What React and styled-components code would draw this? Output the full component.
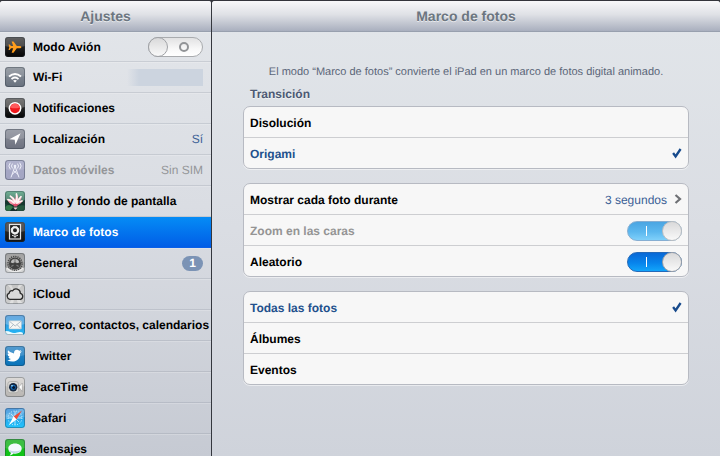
import { useState } from "react"
import styled, { createGlobalStyle } from "styled-components"

const cells = [
    { id: "wifi", label: "Wi-Fi", icon: WifiIcon, hidden: true },
    { id: "notificaciones", label: "Notificaciones", icon: NotificationsIcon },
    { id: "localizacion", label: "Localización", icon: LocationIcon, value: "Sí" },
    { id: "datos", label: "Datos móviles", icon: CellularIcon, value: "Sin SIM", disabled: true },
    { id: "brillo", label: "Brillo y fondo de pantalla", icon: WallpaperIcon },
    { id: "marco", label: "Marco de fotos", icon: FrameIcon },
    { id: "general", label: "General", icon: GeneralIcon, badge: 1 },
    { id: "icloud", label: "iCloud", icon: CloudIcon },
    { id: "correo", label: "Correo, contactos, calendarios", icon: MailIcon },
    { id: "twitter", label: "Twitter", icon: TwitterIcon },
    { id: "facetime", label: "FaceTime", icon: FaceTimeIcon },
    { id: "safari", label: "Safari", icon: SafariIcon },
    { id: "mensajes", label: "Mensajes", icon: MessagesIcon },
]

export default function App(){
    const [selected, setSelected] = useState("marco")
    const [airplane, setAirplane] = useState(false)
    const [shuffle, setShuffle] = useState(true)
    const [transition, setTransition] = useState("Origami")
    const [album, setAlbum] = useState("Todas las fotos")

    return (
        <>
            <GlobalStyle />
            <Shell>
                <Sidebar>
                    <TopBar><h1>Ajustes</h1></TopBar>
                    <nav>
                        <MenuSwitchRow>
                            <AirplaneIcon />
                            <span className="label">Modo Avión</span>
                            <Switch checked={airplane} onChange={e => setAirplane(e.target.checked)} />
                        </MenuSwitchRow>
                        {cells.map(({ id, label, icon: Icon, value, badge, hidden, disabled }) => (
                            <MenuRow
                                key={id}
                                href={`#${id}`}
                                $active={selected === id}
                                $disabled={disabled}
                                aria-disabled={disabled}
                                onClick={() => !disabled && setSelected(id)}
                            >
                                <Icon />
                                <span className="label">{label}</span>
                                {value && <span className="value">{value}</span>}
                                {badge && <Badge>{badge}</Badge>}
                                {hidden && <HiddenName />}
                            </MenuRow>
                        ))}
                    </nav>
                </Sidebar>
                <Pane>
                    <TopBar><h2>Marco de fotos</h2></TopBar>
                    <Content>
                        <Hint>El modo “Marco de fotos” convierte el iPad en un marco de fotos digital animado.</Hint>
                        <GroupTitle id="transition">Transición</GroupTitle>
                        <Group role="radiogroup" aria-labelledby="transition">
                            {["Disolución", "Origami"].map(name => (
                                <Option key={name} group="transition" name={name} value={transition} onPick={setTransition} />
                            ))}
                        </Group>
                        <Group>
                            <DurationRow type="button">
                                <span>Mostrar cada foto durante</span>
                                <span className="value">3 segundos</span>
                                <Chevron />
                            </DurationRow>
                            <Row $disabled>
                                <span>Zoom en las caras</span>
                                <Switch defaultChecked disabled />
                            </Row>
                            <Row>
                                <span>Aleatorio</span>
                                <Switch checked={shuffle} onChange={e => setShuffle(e.target.checked)} />
                            </Row>
                        </Group>
                        <Group role="radiogroup" aria-label="Fotos">
                            {["Todas las fotos", "Álbumes", "Eventos"].map(name => (
                                <Option key={name} group="album" name={name} value={album} onPick={setAlbum} />
                            ))}
                        </Group>
                    </Content>
                </Pane>
            </Shell>
        </>
    )
}

function Option({ group, name, value, onPick }){
    const checked = value === name
    return (
        <Row $checked={checked}>
            <Radio name={group} checked={checked} onChange={() => onPick(name)} />
            <span>{name}</span>
            {checked && <Check />}
        </Row>
    )
}

function Check(){
    return (
        <svg width="10" height="12" viewBox="0 0 10 12" aria-hidden="true">
            <path d="M1.100 5 3.600 8.400 8.600 1" fill="none" stroke="#174a8c" strokeWidth="2.300" />
        </svg>
    )
}

function Chevron(){
    return (
        <svg width="8" height="12" viewBox="0 0 8 12" aria-hidden="true">
            <path d="M1.500 1 6 5 1.500 9" fill="none" stroke="#6f7175" strokeWidth="2.200" />
        </svg>
    )
}

/* rounded app tile with a light upper half, shared by every menu icon */
function Tile({ id, from, to, gloss = 0.3, children }){
    return (
        <IconSvg viewBox="0 0 20 20" aria-hidden="true">
            <defs>
                <linearGradient id={id} x1="0" y1="0" x2="0" y2="1">
                    <stop offset="0" stopColor={from} />
                    <stop offset="1" stopColor={to} />
                </linearGradient>
                <clipPath id={`${id}-clip`}><rect width="20" height="20" rx="3" /></clipPath>
            </defs>
            <g clipPath={`url(#${id}-clip)`}>
                <rect width="20" height="20" fill={`url(#${id})`} />
                <path d="M0 0h20v9q-10 3-20 0z" fill="#fff" opacity={gloss} />
                {children}
            </g>
            <rect x=".5" y=".5" width="19" height="19" rx="2.6" fill="none" stroke="#26303c" strokeOpacity=".35" />
        </IconSvg>
    )
}

function AirplaneIcon(){
    return (
        <Tile id="airplane" from="#3a3a3a" to="#050505" gloss={0.2}>
            <path d="M16.3 10.2c0-.6-.8-1.100-1.700-1.100h-2.800L8.500 4.600H6.600l1.600 4.500H6L4.700 7.400H3.500l.8 2.800-.8 2.800h1.200L6 11.300h2.200l-1.600 4.500h1.900l3.300-4.500h2.800c.9 0 1.700-.5 1.700-1.100z" fill="#ff9d1c" />
        </Tile>
    )
}

function WifiIcon(){
    return (
        <Tile id="wifi-tile" from="#8b929b" to="#68717e" gloss={0.12}>
            <g fill="none" stroke="#fff" strokeWidth="1.9">
                <path d="M4 9.4q6-5 12 0" />
                <path d="M6.5 12.1q3.5-3 7 0" />
            </g>
            <path d="M8.1 13.6q1.9-1.3 3.8 0L10 15.8z" fill="#fff" />
        </Tile>
    )
}

function NotificationsIcon(){
    return (
        <Tile id="notifications" from="#444" to="#050505" gloss={0.28}>
            <circle cx="10" cy="10.3" r="6.4" fill="#fff" />
            <circle cx="10" cy="10.3" r="4.9" fill="#ee171c" />
            <path d="M5.4 9.4a4.7 4.7 0 0 1 9.2 0q-4.6 1.8-9.2 0z" fill="#ff5a5c" />
        </Tile>
    )
}

function LocationIcon(){
    return (
        <Tile id="location" from="#8c909b" to="#6d717f" gloss={0.15}>
            <path d="M15.6 4.2 4.4 10.2l5.3.5.7 5z" fill="#fff" />
        </Tile>
    )
}

function CellularIcon(){
    return (
        <Tile id="cellular" from="#a6a8c6" to="#a3a5c2" gloss={0.12}>
            <g fill="none" stroke="#eceef8" strokeWidth="1">
                <path d="M10 6.2 6 17.4M10 6.2l4 11.2M8.5 10.500l4.500 4M11.500 10.500l-4.500 4" />
                <path d="M7.5 3.6a3.6 3.6 0 0 0 0 4.8M12.5 3.6a3.6 3.6 0 0 1 0 4.8M5.3 2.7a5 5 0 0 0 0 6.6M14.7 2.7a5 5 0 0 1 0 6.600" />
            </g>
            <circle cx="10" cy="6" r="1.3" fill="#eceef8" />
        </Tile>
    )
}

function WallpaperIcon(){
    return (
        <Tile id="wallpaper" from="#4f9f7c" to="#092621" gloss={0.2}>
            <path d="M0 10q5-3 9 1t11-2v5q-9 3-20-1z" fill="#16372d" />
            <path d="M0 16q4-4 8 0l-3 4H0z" fill="#367b4c" />
            <path d="M12 16q4-3 8-1v5h-8z" fill="#26583e" />
            <path d="M2 8q3.500-.5 5.500 1.500L5 4.500q3.500 1 5 4l1.500-6q2.500 3 1.300 6.300L16.500 5q.3 3-1.700 5l3.200-.7q-1.500 4-7.200 5.200Q3.500 13.500 2 8z" fill="#f596a8" />
            <path d="M5.400 5.200q3.300 1.800 4.400 5.300M11.400 3q1.400 4-.6 8M16 5.700q-2.300 2-3.600 5.600M3 8.700q4 .8 6 3.300M17 10q-3 .5-5 2.500" fill="none" stroke="#fff4f4" strokeWidth="1.700" strokeLinecap="round" />
            <path d="M7.500 12.500q3 1 6 0l-1.500 3H9z" fill="#e2506e" />
            <path d="M8.500 16.500h4l-1.500 2h-1z" fill="#f2d0d4" />
        </Tile>
    )
}

function FrameIcon(){
    return (
        <Tile id="frame" from="#343434" to="#111" gloss={0.2}>
            <rect x="4.500" y="2.500" width="11" height="14.500" fill="#202020" stroke="#e4e4e4" strokeWidth="1.200" />
            <circle cx="10" cy="8.200" r="3" fill="none" stroke="#eee" strokeWidth="2" />
            <circle cx="10" cy="8.200" r="3.800" fill="none" stroke="#eee" strokeWidth="1" strokeDasharray="2 1" />
            <path d="M10 12v3.400M7 13.300q2 0 3 2 1-2 3-2" fill="none" stroke="#ddd" strokeWidth="1" />
        </Tile>
    )
}

function GeneralIcon(){
    return (
        <Tile id="general-tile" from="#8a8a8a" to="#a9a9a9" gloss={0.2}>
            <path d="M0 20v-6q3 3 10 3t10-3v6z" fill="#d6d6d6" />
            <circle cx="10" cy="10.500" r="7" fill="none" stroke="#4a4a4a" strokeWidth="1.600" strokeDasharray="1.300 .9" />
            <circle cx="10" cy="10.500" r="6" fill="#3f3f3f" />
            <path d="M5.700 9.500a4.400 4.400 0 0 1 8.600 0l-2.500.8a2 2 0 0 0-3.600 0z" fill="#b9b9b9" />
            <path d="M10 9V5.500M6.300 13.600 8.500 12M13.700 13.600 11.500 12" stroke="#777" strokeWidth="1.200" />
            <path d="M2 14.800q3 3.700 8 3.700t8-3.700" fill="none" stroke="#ececec" strokeWidth="1.200" />
        </Tile>
    )
}

function CloudIcon(){
    return (
        <Tile id="cloud" from="#b4b4b4" to="#cfcfcf" gloss={0.2}>
            <path d="M10 10 2 0h4zM10 10 14 0h4zM10 10 4 20h4zM10 10l8 10h-5z" fill="#fff" opacity=".4" />
            <path d="M4.800 15.300a3.200 3.200 0 0 1-.6-6.100 2.500 2.500 0 0 1 3.300-2.400 4.300 4.300 0 0 1 7.800 2.500 3.100 3.100 0 0 1 .2 6z" fill="#dadada" stroke="#2c2c2c" strokeWidth="1.300" />
        </Tile>
    )
}

function MailIcon(){
    return (
        <Tile id="mail" from="#3688d2" to="#22b8f7" gloss={0.25}>
            <path d="M0 16q4 0 6 1.300t6 .2 6 .5v2H0z" fill="#e8faff" />
            <rect x="4" y="5.800" width="12.400" height="8.200" rx=".6" fill="#f7f7f5" stroke="#b0c2cc" strokeWidth=".6" />
            <path d="m4.500 6.300 5.700 4.700 5.700-4.700M4.500 13.600l3.900-4M15.900 13.600l-3.900-4" fill="none" stroke="#9fb0bc" strokeWidth=".8" />
        </Tile>
    )
}

function TwitterIcon(){
    return (
        <Tile id="twitter-tile" from="#358ac9" to="#0873b9" gloss={0.15}>
            <path d="M2.300 14.200q2.200.1 3.700-1.100-2-.3-2.600-2.100h1.300Q2.500 10 2.600 7.800l1.200.3Q1.900 6.300 3 4.300q2.500 2.900 6 3.100Q8.900 4 12 3.800q1.300 0 2.200.9l2-.7-1.200 1.700 1.900-.4-1.700 1.900q.1 5.200-4.100 7.500-4.400 2-8.800-.5z" fill="#fff" />
        </Tile>
    )
}

function FaceTimeIcon(){
    return (
        <Tile id="facetime-tile" from="#d0cdca" to="#b9b6b3" gloss={0.25}>
            <rect x="2.800" y="4.500" width="10.700" height="11.300" rx="2.500" fill="#d8d7d5" stroke="#a5a3a1" strokeWidth=".7" />
            <path d="m13.700 10 3.600-4v8.500z" fill="#fff" stroke="#999" strokeWidth=".6" />
            <circle cx="8.200" cy="10.200" r="4.200" fill="#172840" />
            <circle cx="8.200" cy="10.200" r="2.500" fill="#126bbb" />
            <circle cx="8.600" cy="10.600" r="1.500" fill="#06162d" />
            <circle cx="7" cy="8.700" r=".8" fill="#bcecff" />
        </Tile>
    )
}

function SafariIcon(){
    return (
        <Tile id="safari-tile" from="#2d83d4" to="#22c6ff" gloss={0.2}>
            <path d="M0 7 5 4l4 2 5-5h6v3l-8 6-7-1-5 3z" fill="#8ac8ee" opacity=".5" />
            <circle cx="10" cy="10" r="7" fill="none" stroke="#d9f4ff" strokeWidth="1" strokeDasharray="1 1.600" />
            <path d="M10 3v14M3 10h14M6 6l8 8" stroke="#e5f8ff" strokeWidth=".7" />
            <path d="M17 2.500 11.500 11.400 8.700 8.600z" fill="#ee4d39" />
            <path d="m3.600 17.400 5-8.800 2.800 2.800z" fill="#fff" />
        </Tile>
    )
}

function MessagesIcon(){
    return (
        <Tile id="messages-tile" from="#1fae26" to="#0cc913" gloss={0.15}>
            <path d="M10 4.500c-4 0-6.700 2.200-6.700 5.100 0 1.800 1 3.300 2.700 4.200-.1 1.200-.8 2-1.500 2.700 1.700-.2 3-.9 3.900-1.900l1.600.1c4 0 6.700-2.200 6.700-5.100S14 4.500 10 4.500z" fill="#f4faff" />
            <path d="M4 11q6 2.500 12 0-1.500 3-6 3.200T4 11z" fill="#c5d9e8" />
        </Tile>
    )
}

const GlobalStyle = createGlobalStyle`
    *, *::before, *::after{
        box-sizing: border-box;
    }
    body{
        margin: 0;
        background: #000;
        font-family: "Liberation Sans", Arial, sans-serif;
        font-size: 12px;
        line-height: 16px;
        color: #000;
        text-rendering: geometricPrecision;
    }
`

const Shell = styled.div`
    display: flex;
    height: 100vh;
    padding-top: 1px;
    overflow: hidden;
    background: #34353c;
`

const Sidebar = styled.aside`
    flex: 0 0 212px;
    overflow: hidden;
    border-right: 1px solid #34373e;
    border-radius: 3px 3px 0 0;
    background: linear-gradient(#e3e6ea, #dadde3 45%, #c6cad3);
`

const Pane = styled.main`
    flex: 1;
    min-width: 0;
    overflow: hidden;
    border-radius: 3px 3px 0 0;
    background: linear-gradient(#e2e6ea, #dadde3 50%, #cfd3db);
`

const TopBar = styled.header`
    height: 31px;
    border-bottom: 1px solid #98a0ae;
    background: linear-gradient(#f8f8fa, #dfe1e6 45%, #a9afbe);
    text-align: center;

    h1, h2{
        margin: 0;
        font-size: 14px;
        line-height: 30px;
        color: #6c7680;
        text-shadow: 0 1px 0 rgba(255, 255, 255, 0.6);
    }
`

const MenuRow = styled.a`
    display: flex;
    align-items: center;
    height: 31px;
    padding: 0 8px 0 5px;
    border-bottom: 1px solid ${({ $active }) => $active ? "#0a5fe8" : "rgba(110, 120, 135, 0.2)"};
    box-shadow: ${({ $active }) => $active ? "none" : "inset 0 1px 0 rgba(255, 255, 255, 0.2)"};
    background: ${({ $active }) => $active ? "linear-gradient(#058cf5, #015de6)" : "none"};
    color: ${({ $active, $disabled }) => $active ? "#fff" : $disabled ? "#949699" : "#000"};
    text-decoration: none;
    white-space: nowrap;

    .label{
        flex: 1;
        margin-left: 8px;
        font-weight: 700;
    }
    .value{
        color: ${({ $disabled }) => $disabled ? "#949699" : "#3b5f96"};
    }
`

const MenuSwitchRow = styled(MenuRow).attrs({ as: "label" })`
    height: 30px;
`

const IconSvg = styled.svg`
    flex: none;
    width: 20px;
    height: 20px;
`

const Badge = styled.span`
    width: 21px;
    border-radius: 8px;
    background: #7b93b5;
    color: #fff;
    font-weight: 700;
    line-height: 15px;
    text-align: center;
`

const HiddenName = styled.span`
    width: 76px;
    height: 17px;
    background: linear-gradient(90deg, rgba(204, 212, 223, 0), #ccd4df 12px);
`

const Content = styled.div`
    padding: 32px 31px 0;
`

const Hint = styled.p`
    margin: 0 0 6px;
    color: #5b6678;
    font-size: 11px;
    text-align: center;
`

const GroupTitle = styled.h3`
    margin: 0 0 4px 7px;
    color: #4c5973;
    font-size: 12px;
    line-height: 16px;
    text-shadow: 0 1px 0 rgba(255, 255, 255, 0.6);
`

const Group = styled.section`
    margin-bottom: 14px;
    border: 1px solid #b7bac2;
    border-radius: 7px;
    box-shadow: 0 1px 0 rgba(255, 255, 255, 0.5);
    background: #f7f7f7;

    > * + *{
        border-top: 1px solid #cdced1;
    }
    > :not(:first-child){
        height: 31px;
    }
`

const Row = styled.label`
    display: flex;
    align-items: center;
    justify-content: space-between;
    width: 100%;
    height: 30px;
    padding: 1px 6px 0;
    color: ${({ $checked, $disabled }) => $checked ? "#22508c" : $disabled ? "#949494" : "#000"};
    font-weight: 700;
`

const DurationRow = styled(Row).attrs({ as: "button" })`
    border: 0;
    background: none;
    font-family: inherit;
    font-size: inherit;
    text-rendering: inherit;

    .value{
        margin: 0 7px 0 auto;
        color: #3b5f96;
        font-weight: 400;
    }
`

const Radio = styled.input.attrs({ type: "radio" })`
    appearance: none;
    position: absolute;
    margin: 0;
`

const Switch = styled.input.attrs({ type: "checkbox", role: "switch" })`
    appearance: none;
    display: flex;
    align-items: center;
    flex: none;
    width: 55px;
    height: 20px;
    margin: 0;
    border: 1px solid #a9abae;
    border-radius: 10px;
    background: linear-gradient(#e2e2e3, #f8f8f8 60%, #fff);

    &::before{
        content: "";
        order: 1;
        width: 20px;
        height: 20px;
        margin-left: -1px;
        border: 1px solid #a0a2a6;
        border-radius: 50%;
        background: linear-gradient(#d9d9da, #f9f9f9);
    }
    &::after{
        content: "";
        order: 2;
        width: 10px;
        height: 10px;
        margin-left: 11px;
        border: 2px solid #929497;
        border-radius: 50%;
    }
    &:checked{
        border-color: #2469b8;
        background: linear-gradient(#0968d6, #0784ec 55%, #12a5fa);
    }
    &:checked::before{
        order: 2;
        margin: 0 -1px 0 auto;
    }
    &:checked::after{
        order: 1;
        width: 1px;
        height: 10px;
        margin-left: 18px;
        border: 0;
        border-radius: 0;
        background: #fff;
    }
    &:checked:disabled{
        border-color: #86aed2;
        background: linear-gradient(#4aa5e2, #5cb8ef 55%, #7fd0fa);
    }
    &:disabled::before{
        border-color: #bcbec1;
    }
`
